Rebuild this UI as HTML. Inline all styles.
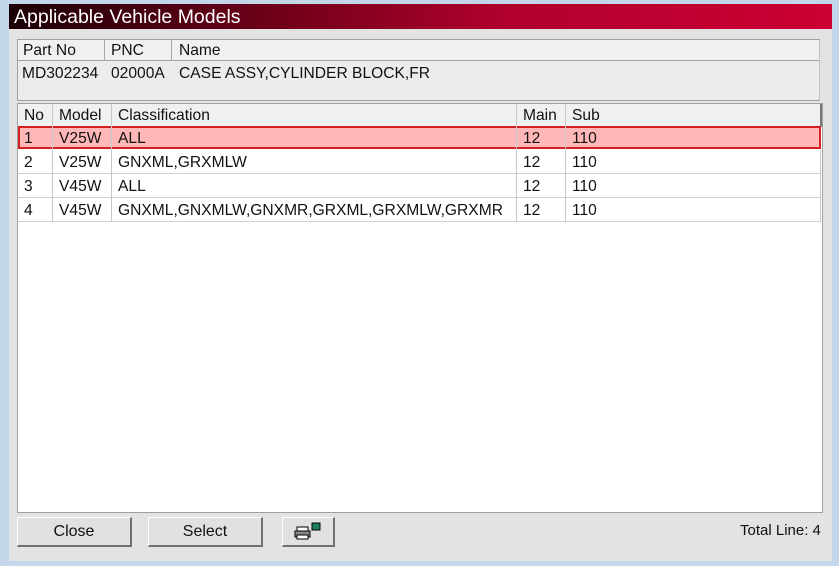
<!DOCTYPE html>
<html><head><style>
body{margin:0;width:839px;height:566px;background:#c4d6ea;font-family:"Liberation Sans",sans-serif;position:relative;overflow:hidden}
.a{position:absolute}
.title{left:9px;top:4px;width:823px;height:25px;background:linear-gradient(90deg,#1a0006 0%,#6a0018 30%,#b0002c 60%,#cc0033 100%);color:#fff;font-size:19.5px;line-height:26px;padding-left:5px;box-sizing:border-box}
.body{left:9px;top:29px;width:823px;height:532px;background:#e3e3e3}
.t{font-size:15.6px;color:#111;position:absolute;white-space:nowrap}
.vl{position:absolute;width:1px;background:#a8a8a8}
.hl{position:absolute;height:1px;background:#d0d0d0}
.btn{position:absolute;top:517px;height:30px;background:#e1e1e1;border-top:1px solid #fff;border-left:1px solid #fff;border-right:2px solid #707070;border-bottom:2px solid #707070;box-sizing:border-box;font-size:16px;text-align:center;line-height:28px;color:#111}
</style></head><body>
<div class="a title">Applicable Vehicle Models</div>
<div class="a body"></div>
<div class="a" style="left:17px;top:39px;width:803px;height:62px;background:#ececec;border:1px solid #a0a0a0;border-right-color:#c0c0c0;box-sizing:border-box"></div>
<div class="a" style="left:18px;top:40px;width:801px;height:20px;background:#f0f0f0;border-bottom:1px solid #a0a0a0"></div>
<div class="vl" style="left:104px;top:40px;height:20px"></div>
<div class="vl" style="left:171px;top:40px;height:20px"></div>
<div class="t" style="left:23px;top:42px">Part No</div>
<div class="t" style="left:111px;top:42px">PNC</div>
<div class="t" style="left:179px;top:42px">Name</div>
<div class="t" style="left:22px;top:65px">MD302234</div>
<div class="t" style="left:111px;top:65px">02000A</div>
<div class="t" style="left:179px;top:65px">CASE ASSY,CYLINDER BLOCK,FR</div>
<div class="a" style="left:17px;top:103px;width:806px;height:410px;background:#fff;border:1px solid #a0a0a0;box-sizing:border-box"></div>
<div class="a" style="left:18px;top:104px;width:802px;height:22px;background:#f0f0f0;border-bottom:1px solid #a0a0a0;border-right:2px solid #777"></div>
<div class="a" style="left:18px;top:126px;width:803px;height:23px;background:#ffb7b7;border:2px solid #d42020;box-sizing:border-box"></div>
<div class="hl" style="left:18px;top:173px;width:802px"></div>
<div class="hl" style="left:18px;top:197px;width:802px"></div>
<div class="hl" style="left:18px;top:221px;width:802px"></div>
<div class="vl" style="left:52px;top:104px;height:118px;background:#c8c8c8"></div>
<div class="vl" style="left:111px;top:104px;height:118px;background:#c8c8c8"></div>
<div class="vl" style="left:516px;top:104px;height:118px;background:#c8c8c8"></div>
<div class="vl" style="left:565px;top:104px;height:118px;background:#c8c8c8"></div>
<div class="vl" style="left:820px;top:150px;height:72px;background:#c8c8c8"></div>
<div class="t" style="left:24px;top:107px">No</div><div class="t" style="left:59px;top:107px">Model</div><div class="t" style="left:118px;top:107px">Classification</div><div class="t" style="left:523px;top:107px">Main</div><div class="t" style="left:572px;top:107px">Sub</div>
<div class="t" style="left:24px;top:130px">1</div><div class="t" style="left:59px;top:130px">V25W</div><div class="t" style="left:118px;top:130px">ALL</div><div class="t" style="left:523px;top:130px">12</div><div class="t" style="left:572px;top:130px">110</div>
<div class="t" style="left:24px;top:154px">2</div><div class="t" style="left:59px;top:154px">V25W</div><div class="t" style="left:118px;top:154px">GNXML,GRXMLW</div><div class="t" style="left:523px;top:154px">12</div><div class="t" style="left:572px;top:154px">110</div>
<div class="t" style="left:24px;top:178px">3</div><div class="t" style="left:59px;top:178px">V45W</div><div class="t" style="left:118px;top:178px">ALL</div><div class="t" style="left:523px;top:178px">12</div><div class="t" style="left:572px;top:178px">110</div>
<div class="t" style="left:24px;top:202px">4</div><div class="t" style="left:59px;top:202px">V45W</div><div class="t" style="left:118px;top:202px">GNXML,GNXMLW,GNXMR,GRXML,GRXMLW,GRXMR</div><div class="t" style="left:523px;top:202px">12</div><div class="t" style="left:572px;top:202px">110</div>
<div class="btn" style="left:17px;width:115px">Close</div>
<div class="btn" style="left:148px;width:115px">Select</div>
<div class="btn" style="left:282px;width:53px">
<svg width="30" height="22" viewBox="0 0 30 22" style="margin-top:3px">
<rect x="4" y="6" width="11" height="4" fill="#fff" stroke="#000"/>
<rect x="2" y="10" width="15" height="6" fill="#888" stroke="#000"/>
<rect x="4" y="14" width="11" height="4" fill="#fff" stroke="#000"/>
<rect x="19" y="2" width="8" height="7" fill="#1a8060" stroke="#000"/>
</svg></div>
<div class="t" style="left:740px;top:522px;font-size:15px">Total Line: 4</div>
</body></html>
